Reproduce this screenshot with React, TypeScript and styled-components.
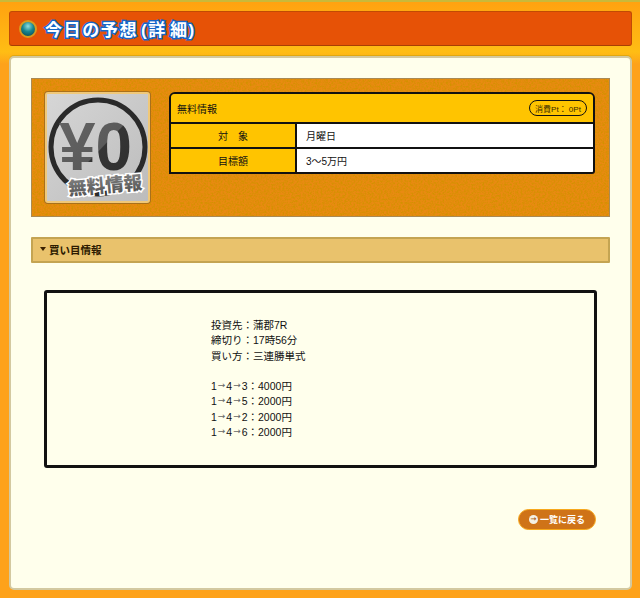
import React from 'react';
import styled, { createGlobalStyle } from 'styled-components';

const noise = (freq: number) =>
  `url("data:image/svg+xml,%3Csvg xmlns='http://www.w3.org/2000/svg' width='200' height='200'%3E%3Cfilter id='n'%3E%3CfeTurbulence type='fractalNoise' baseFrequency='${freq}' numOctaves='3' stitchTiles='stitch'/%3E%3CfeColorMatrix values='0 0 0 0 0.66 0 0 0 0 0.28 0 0 0 0 0 0 0 0 2.4 -0.85'/%3E%3C/filter%3E%3Crect width='200' height='200' filter='url(%23n)'/%3E%3C/svg%3E")`;

const font = `'Liberation Sans', 'Noto Sans CJK JP', sans-serif`;

const GlobalStyle = createGlobalStyle`
  html, body {
    margin: 0;
    padding: 0;
    background: #fea21a;
  }
  body {
    font-family: ${font};
    font-size: 10px;
    color: #111;
  }
`;

const Page = styled.div`
  box-sizing: border-box;
  width: 640px;
  height: 598px;
  overflow: hidden;
  padding: 9px 8px 8px 9px;
  border-top: 2px solid #c9b93a;
  background: linear-gradient(to bottom, #ffa210 0, #ffbd14 50px, #fea21a 62px, #fea21a 100%);
  display: flex;
  flex-direction: column;
  gap: 10px;
`;

const TitleBar = styled.header`
  height: 35px;
  flex: none;
  box-sizing: border-box;
  border: 1px solid #c14a05;
  border-bottom-color: #a83f04;
  border-radius: 3px;
  background: #e65206;
  display: flex;
  align-items: center;
  gap: 8px;
  padding-left: 9px;
`;

const Orb = styled.span`
  width: 18px;
  height: 18px;
  border-radius: 50%;
  box-sizing: border-box;
  border: 2px solid #d99a1e;
  background: radial-gradient(circle at 50% 30%, #8fdede 0, #17868f 45%, #063f4a 100%);
`;

const Title = styled.h1`
  margin: 0;
  font-family: ${font};
  font-size: 17px;
  font-weight: 700;
  letter-spacing: 1.6px;
  color: #fff;
  -webkit-text-stroke: 3px #1566c8;
  paint-order: stroke fill;
  white-space: pre;
`;

const Panel = styled.main`
  flex: 1;
  box-sizing: border-box;
  background: #ffffec;
  border: 2px solid #d3c9a0;
  border-radius: 5px;
  box-shadow: 0 -1px 0 #e0a810;
  padding: 20px 20px 0;
  display: flex;
  flex-direction: column;
`;

const InfoCard = styled.section`
  box-sizing: border-box;
  height: 139px;
  border: 1px solid #a98a55;
  background-color: #e98a12;
  background-image: ${noise(0.55)};
  padding: 13px 13px 0;
  display: flex;
  gap: 19px;
`;

const Thumb = styled.div`
  width: 105px;
  height: 111px;
  flex: none;
  box-sizing: border-box;
  border: 2px solid #f0c878;
  border-radius: 3px;
  box-shadow: 0 0 0 1px #a8701c;
  background: #c9c9c9;
  overflow: hidden;
`;

const InfoTable = styled.div`
  width: 426px;
  height: 82px;
  box-sizing: border-box;
  border: 2px solid #111;
  border-top-left-radius: 6px;
  border-top-right-radius: 6px;
  border-bottom-right-radius: 3px;
  overflow: hidden;
  display: grid;
  grid-template-columns: 126px 1fr;
  grid-template-rows: 30px 25px 1fr;
`;

const InfoHead = styled.div`
  grid-column: 1 / 3;
  background: #ffc400;
  border-bottom: 2px solid #111;
  display: flex;
  align-items: center;
  justify-content: space-between;
  padding: 0 6px;
`;

const PointPill = styled.span`
  box-sizing: border-box;
  height: 16px;
  width: 58px;
  border: 1.5px solid #111;
  border-radius: 8px;
  font-size: 8px;
  display: flex;
  align-items: center;
  justify-content: center;
  white-space: pre;
  color: #3a2c00;
`;

const LabelCell = styled.div<{ $last?: boolean }>`
  background: #ffc400;
  border-right: 2px solid #111;
  border-bottom: ${p => (p.$last ? 'none' : '2px solid #111')};
  display: flex;
  align-items: center;
  justify-content: center;
  white-space: pre;
`;

const ValueCell = styled.div<{ $last?: boolean }>`
  background: #fff;
  border-bottom: ${p => (p.$last ? 'none' : '2px solid #111')};
  display: flex;
  align-items: center;
  padding-left: 9px;
`;

const SectionBar = styled.h2`
  box-sizing: border-box;
  margin: 20px 0 0;
  height: 26px;
  background: #e9c26c;
  border: 2px solid #c4a452;
  border-radius: 1px;
  display: flex;
  align-items: center;
  gap: 3px;
  padding: 0 0 2px 7px;
  font-family: ${font};
  font-size: 10.5px;
  font-weight: 700;
  color: #2c1a00;
`;

const Caret = styled.span`
  width: 0;
  height: 0;
  border-left: 3.5px solid transparent;
  border-right: 3.5px solid transparent;
  border-top: 4px solid #3a2000;
`;

const TicketBox = styled.section`
  box-sizing: border-box;
  margin: 27px 13px 0;
  height: 178px;
  border: 3px solid #111;
  border-radius: 3px;
  padding: 25px 0 0 164px;
  font-size: 10.5px;
`;

const TicketLine = styled.div`
  height: 15.3px;
  line-height: 15.3px;
  white-space: pre;
`;

const Arrow = styled.span`
  display: inline-block;
  width: 9.5px;
  height: 10px;
  line-height: 10px;
  text-align: center;
  overflow: hidden;
  color: #666;
  font-family: 'DejaVu Sans', sans-serif;
  font-size: 9px;
`;

const Footer = styled.div`
  display: flex;
  justify-content: flex-end;
  margin: 41px 14px 0 0;
`;

const BackButton = styled.a`
  box-sizing: border-box;
  width: 78px;
  height: 21px;
  border-radius: 11px;
  border: 1px solid #f7a81c;
  background: #cf7318;
  display: flex;
  align-items: center;
  justify-content: center;
  gap: 2px;
  color: #fff;
  font-size: 9px;
  font-weight: 700;
`;

const BackDot = styled.span`
  width: 9px;
  height: 9px;
  border-radius: 50%;
  background: #f4f0e4;
  color: #a85a14;
  font-family: 'DejaVu Sans', sans-serif;
  font-size: 7px;
  line-height: 9px;
  text-align: center;
  overflow: hidden;
`;

const ZeroBadge = () => (
  <svg width="101" height="107" viewBox="0 0 101 107">
    <defs>
      <linearGradient id="paper" x1="0" y1="0" x2="1" y2="1">
        <stop offset="0" stopColor="#d6d6d6" />
        <stop offset="1" stopColor="#bcbcbc" />
      </linearGradient>
      <linearGradient id="ink" x1="0" y1="0" x2="1" y2="1">
        <stop offset="0" stopColor="#666" />
        <stop offset="0.55" stopColor="#5a5a5a" />
        <stop offset="0.56" stopColor="#353535" />
        <stop offset="1" stopColor="#2e2e2e" />
      </linearGradient>
      <linearGradient id="stamp" x1="0" y1="0" x2="0" y2="1">
        <stop offset="0" stopColor="#8a8a8a" />
        <stop offset="1" stopColor="#4e4e4e" />
      </linearGradient>
    </defs>
    <rect width="101" height="107" fill="url(#paper)" />
    <circle cx="51" cy="53" r="47" fill="none" stroke="#2a2a2a" strokeWidth="5" />
    <text
      x="12"
      y="76"
      fontFamily="'Liberation Sans', sans-serif"
      fontWeight="700"
      fontSize="68"
      fill="url(#ink)"
      textLength="73"
      lengthAdjust="spacingAndGlyphs"
    >
      ¥0
    </text>
    <text
      x="21"
      y="98"
      transform="rotate(-5 59 90)"
      fontFamily="'Noto Sans CJK JP', sans-serif"
      fontWeight="900"
      fontSize="18.5"
      fill="url(#stamp)"
      stroke="#fff"
      strokeWidth="3"
      paintOrder="stroke"
    >
      無料情報
    </text>
  </svg>
);

const lines = ['投資先：蒲郡7R', '締切り：17時56分', '買い方：三連勝単式', ''];
const bets = [
  ['3', '4000'],
  ['5', '2000'],
  ['2', '2000'],
  ['6', '2000'],
];

export default function App() {
  return (
    <>
      <GlobalStyle />
      <Page>
        <TitleBar>
          <Orb />
          <Title>{'今日の予想\u200a(詳\u200a細)'}</Title>
        </TitleBar>
        <Panel>
          <InfoCard>
            <Thumb>
              <ZeroBadge />
            </Thumb>
            <InfoTable>
              <InfoHead>
                <span>無料情報</span>
                <PointPill>消費Pt： 0Pt</PointPill>
              </InfoHead>
              <LabelCell>対　象</LabelCell>
              <ValueCell>月曜日</ValueCell>
              <LabelCell $last>目標額</LabelCell>
              <ValueCell $last>3〜5万円</ValueCell>
            </InfoTable>
          </InfoCard>
          <SectionBar>
            <Caret />
            買い目情報
          </SectionBar>
          <TicketBox>
            {lines.map((line, index) => (
              <TicketLine key={index}>{line}</TicketLine>
            ))}
            {bets.map(([last, yen]) => (
              <TicketLine key={last}>
                1<Arrow>→</Arrow>4<Arrow>→</Arrow>
                {last}：{yen}円
              </TicketLine>
            ))}
          </TicketBox>
          <Footer>
            <BackButton>
              <BackDot>→</BackDot>一覧に戻る
            </BackButton>
          </Footer>
        </Panel>
      </Page>
    </>
  );
}
